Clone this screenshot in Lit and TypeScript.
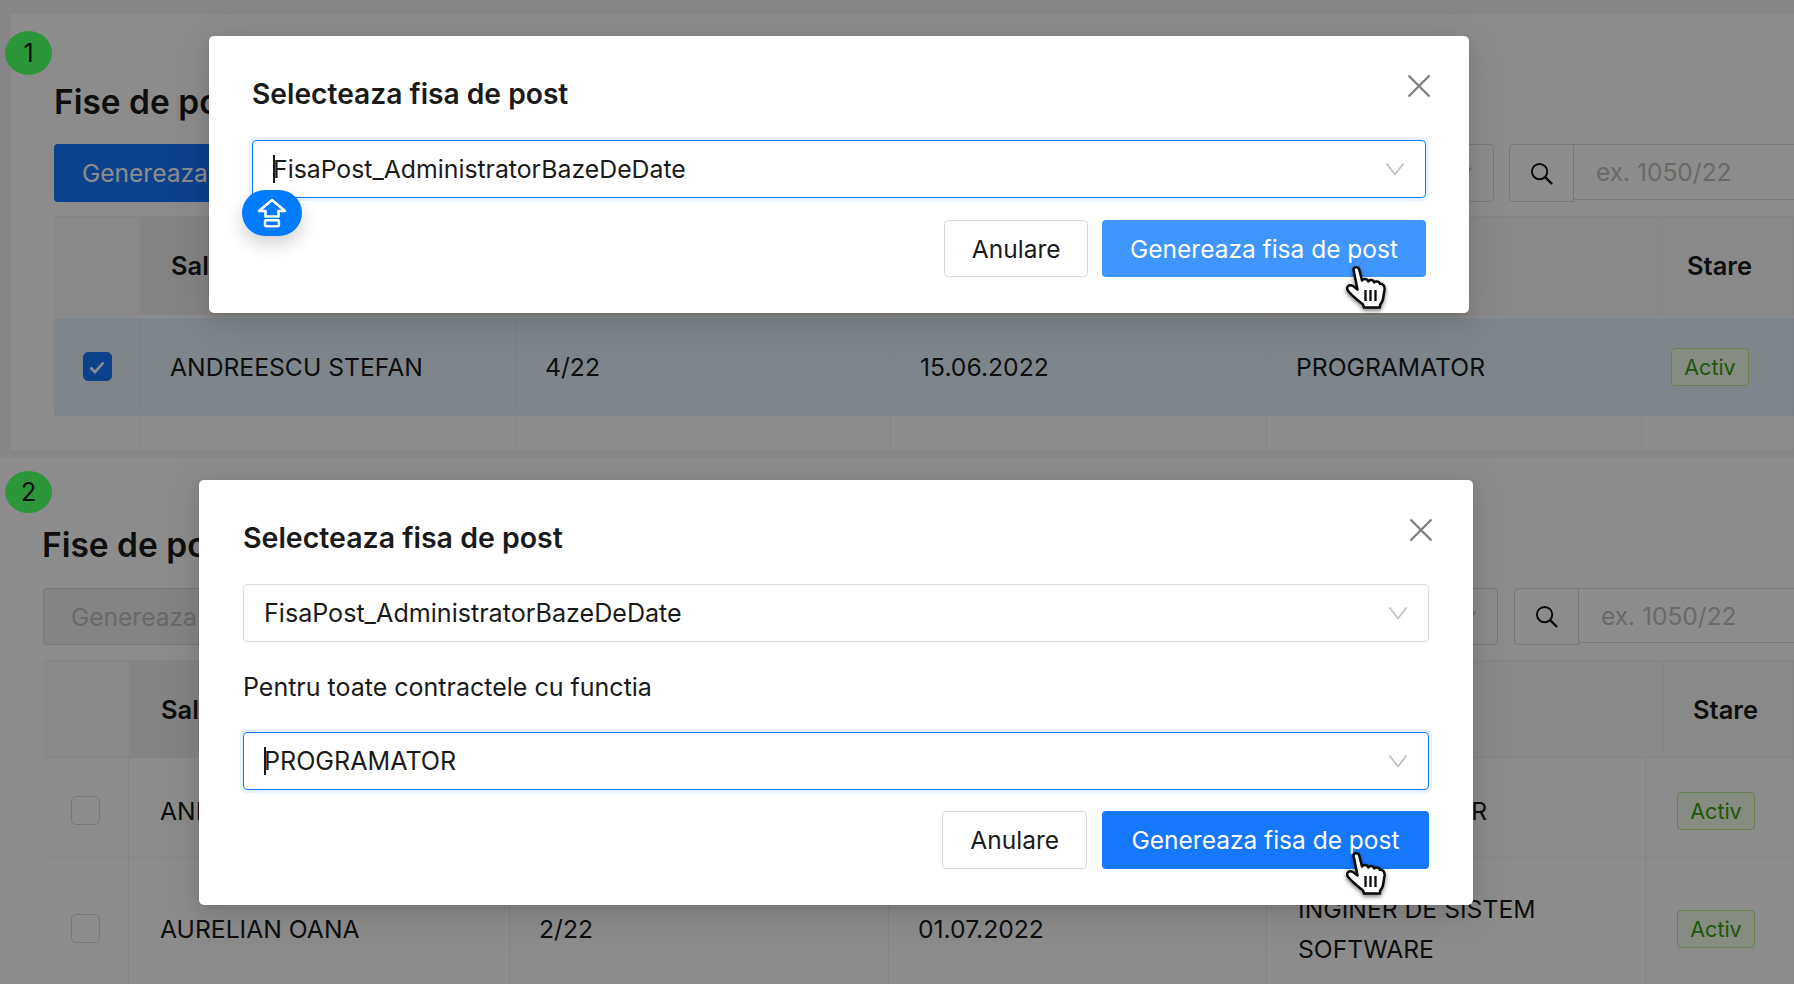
import { LitElement, html, css, nothing } from "lit";
import { customElement } from "lit/decorators.js";

const chevron = html`<svg class="chev" viewBox="0 0 20 14" fill="none"><path d="M1.5 1.5 L10 12.5 L18.5 1.5" stroke="#bdbdbd" stroke-width="1.6"/></svg>`;

const closeIcon = html`<svg class="close" viewBox="0 0 24 24" fill="none"><path d="M1.5 1.5 L22.5 22.5 M22.5 1.5 L1.5 22.5" stroke="#808080" stroke-width="2.3"/></svg>`;

const searchIcon = html`<svg class="search" viewBox="0 0 24 24" fill="none"><circle cx="10" cy="10" r="8" stroke="#111" stroke-width="2"/><path d="M15.8 15.8 L23 23" stroke="#111" stroke-width="2.4"/></svg>`;

const checkIcon = html`<svg class="tick" viewBox="0 0 20 20" fill="none"><path d="M3.5 10.5 L8 15 L16.5 5.5" stroke="#fff" stroke-width="2.6"/></svg>`;

const hand = html`<svg class="hand" viewBox="0 0 40 43" fill="none">
  <path d="M7.5 3.5 C7.5 .5 12.5 .5 13.2 3.5 L16 14.5 C17.5 12 21.5 12.5 22.3 15.5 C23.8 13.2 27.6 13.7 28.2 16.5 C29.8 14.8 33.2 15.2 34 17.8 C37 17.4 39 20 38.5 24 L37 33 C36.5 36 35 37 34 39 L34 41.5 L18 41.5 L17 38.5 C12 34.5 5.5 29.5 1.8 24.5 C-.2 21 3 18 7 20 L11.5 23.5 Z" fill="#fff" stroke="#0a0a0a" stroke-width="2.5" stroke-linejoin="round"/>
  <path d="M19.5 24 V35 M24.5 24 V35 M29.5 24 V35" stroke="#0a0a0a" stroke-width="2.3"/>
</svg>`;

const shiftBadge = html`<div class="shift"><svg viewBox="0 0 30 30" fill="none"><path d="M15 2 L28 13 H21.5 V18.5 H8.5 V13 H2 Z" stroke="#fff" stroke-width="2.6" stroke-linejoin="round"/><rect x="8" y="22.2" width="14" height="6" rx="1.5" stroke="#fff" stroke-width="2.4"/></svg></div>`;

interface Row { name: string; nr: string; date: string; fn: string[]; checked: boolean; cls: string; }

@customElement("app-root")
export class AppRoot extends LitElement {
  static styles = css`
    :host { display: block; width: 1794px; height: 984px; overflow: hidden; font-family: Inter, "Liberation Sans", sans-serif; color: #1a1a1a; background: #fff; }
    .shot { position: relative; overflow: hidden; }
    .shot.a { height: 458px; background: #f5f5f5; padding: 14px 0 8px 11px; box-sizing: border-box; }
    .shot.b { height: 526px; background: #fff; }
    .page { background: #fff; height: 100%; box-sizing: border-box; overflow: hidden; }
    .a .page { padding: 68px 0 0 43px; }
    .b .page { padding: 67px 0 0 43px; }
    h1 { margin: 0; font-size: 33.5px; line-height: 40px; font-weight: 600; white-space: nowrap; }
    .b h1 { margin-left: -1px; }
    .toolbar { display: flex; margin-top: 22px; height: 58px; }
    .b .toolbar { margin-top: 23px; height: 57px; }
    .btn { box-sizing: border-box; height: 100%; padding: 0 27px; border-radius: 4px; font-size: 24.5px; display: flex; align-items: center; white-space: nowrap; border: 1px solid transparent; }
    .btn.primary { background: #1677ff; color: #fff; }
    .btn.light { background: #4096ff; color: #fff; }
    .btn.off { background: #f0f0f0; border-color: #d9d9d9; color: #bfbfbf; }
    .btn.plain { background: #fff; border-color: #d9d9d9; color: #1a1a1a; }
    .spacer { flex: 1; }
    .tsel { position: relative; width: 200px; box-sizing: border-box; border: 1px solid #d9d9d9; border-radius: 4px; margin-right: 15px; }
    .b .tsel { margin-right: 16px; }
    .tsel .chev { right: 20px; }
    .sbtn { width: 65px; box-sizing: border-box; border: 1px solid #d9d9d9; border-radius: 4px 0 0 4px; display: flex; align-items: center; justify-content: center; }
    .search { width: 23px; height: 23px; }
    .sinput { width: 220px; box-sizing: border-box; height: 56px; border: 1px solid #d9d9d9; border-left: none; border-right: none; color: #bfbfbf; font-size: 24.5px; display: flex; align-items: center; padding-left: 22px; }
    .b .sinput { height: 55px; width: 215px; }
    .table { margin-top: 14px; }
    .b .table { margin-top: 15px; }
    .thead, .row { display: grid; }
    .a .thead { grid-template-columns: 87px 375px 1fr 135px; height: 99px; margin-bottom: 3px; }
    .b .thead { grid-template-columns: 87px 380px 1fr 130px; height: 98px; }
    .a .row { grid-template-columns: 87px 375px 375px 376px 375px 152px; }
    .b .row { grid-template-columns: 86px 381px 379px 378px 379px 148px; }
    .thead > div { background: #fafafa; border-right: 1px solid #f0f0f0; border-top: 1px solid #f0f0f0; border-bottom: 1px solid #f0f0f0; display: flex; align-items: center; padding-left: 30px; font-weight: 600; font-size: 25.5px; box-sizing: border-box; white-space: nowrap; }
    .b .thead > div.sorted { padding-left: 31px; }
    .a .thead > div:last-child { padding-left: 28px; }
    .b .thead > div:last-child { padding-left: 29px; }
    .thead > div.sorted { background: #f0f0f0; }
    .row > div { border-right: 1px solid #f0f0f0; border-bottom: 1px solid #f0f0f0; box-sizing: border-box; display: flex; align-items: center; padding-left: 29px; font-size: 24.7px; line-height: 40px; white-space: nowrap; }
    .b .row > div { padding-left: 31px; }
    .b .row > div:nth-child(3), .b .row > div:nth-child(4) { padding-left: 29px; }
    .row > div.ck, .b .row > div.ck { padding-left: 0; justify-content: center; }
    .row.picked > div { background: #e6f4ff; border-color: #e0ecf5; }
    .row.h98 { height: 98px; }
    .row.h100 { height: 100px; }
    .row.h100 > div { padding-top: 6px; }
    .row.h138 { height: 142px; }
    .row.empty { height: 40px; }
    .cb { width: 29px; height: 29px; box-sizing: border-box; border: 1px solid #d9d9d9; border-radius: 5px; background: #fff; display: flex; align-items: center; justify-content: center; }
    .cb.on { background: #1677ff; border-color: #1677ff; }
    .tick { width: 20px; height: 20px; }
    .tag { width: 78px; height: 38px; margin-top: 1px; box-sizing: border-box; border: 1px solid #b7eb8f; background: #f6ffed; border-radius: 4px; color: #389e0d; font-size: 21.5px; display: flex; align-items: center; justify-content: center; }
    .fn { display: block; white-space: normal; }

    .scrim { position: absolute; inset: 0; background: rgba(0,0,0,.45); }
    .step { position: absolute; left: 5px; width: 47px; height: 44px; border-radius: 50%; background: #2b973a; color: #0c0c0c; font-size: 25px; display: flex; align-items: center; justify-content: center; }
    .a .step { top: 31px; }
    .b .step { top: 13px; height: 42px; }
    .modal { position: absolute; background: #fff; border-radius: 5px; box-sizing: border-box; box-shadow: 0 6px 16px rgba(0,0,0,.08), 0 3px 6px -4px rgba(0,0,0,.12), 0 9px 40px 10px rgba(0,0,0,.07); }
    .a .modal { left: 209px; top: 36px; width: 1260px; padding: 38px 43px 36px; }
    .b .modal { left: 199px; top: 22px; width: 1274px; padding: 38px 44px 36px 44px; }
    .title { font-size: 28.2px; line-height: 40px; font-weight: 600; margin-bottom: 26px; }
    .b .title { font-size: 28.5px; }
    .sel { position: relative; height: 58px; box-sizing: border-box; border: 1px solid #d9d9d9; border-radius: 4px; display: flex; align-items: center; padding: 0 20px; font-size: 24.8px; }
    .b .sel { font-size: 25.1px; }
    .sel.focus { border-color: #1677ff; box-shadow: 0 0 0 3px rgba(5,145,255,.1); }
    .caret { display: inline-block; width: 2px; height: 28px; background: #1a1a1a; margin-right: -2px; flex: none; }
    .chev { position: absolute; right: 20px; top: 50%; width: 20px; height: 14px; margin-top: -7px; }
    .close { position: absolute; width: 24px; height: 24px; }
    .a .close { left: 1198px; top: 38px; }
    .b .close { left: 1210px; top: 38px; }
    .label { font-size: 25px; line-height: 34px; margin: 28px 0 28px; }
    .actions { display: flex; justify-content: flex-end; gap: 14px; height: 57px; margin-top: 22px; }
    .a .actions .plain { padding: 0 26.5px; }
    .b .actions { margin-top: 21px; height: 58px; gap: 15px; }
    .b .actions .primary { padding: 0 28.5px; }
    .shift { position: absolute; left: 33px; top: 154px; width: 60px; height: 46px; border-radius: 23px; background: #007bff; display: flex; align-items: center; justify-content: center; box-shadow: 0 8px 18px rgba(0,0,0,.18); }
    .shift svg { width: 30px; height: 30px; }
    .hand { position: absolute; width: 40px; height: 43px; filter: drop-shadow(0 2px 2px rgba(0,0,0,.5)); }
    .a .hand { left: 1137px; top: 230px; }
    .b .hand { left: 1147px; top: 372px; }
  `;

  private renderPage(rows: Row[], emptyRow: boolean, disabled: boolean) {
    return html`<div class="page">
      <h1>Fise de post</h1>
      <div class="toolbar">
        <div class="btn ${disabled ? "off" : "primary"}">Genereaza fisa de post</div>
        <div class="spacer"></div>
        <div class="tsel">${chevron}</div>
        <div class="sbtn">${searchIcon}</div>
        <div class="sinput">ex. 1050/22</div>
      </div>
      <div class="table">
        <div class="thead"><div></div><div class="sorted">Salariat</div><div></div><div>Stare</div></div>
        ${rows.map(r => html`<div class="row ${r.cls}">
          <div class="ck"><span class="cb ${r.checked ? "on" : ""}">${r.checked ? checkIcon : nothing}</span></div>
          <div>${r.name}</div><div>${r.nr}</div><div>${r.date}</div>
          <div><span class="fn">${r.fn.map(l => html`${l}<br />`)}</span></div>
          <div><span class="tag">Activ</span></div>
        </div>`)}
        ${emptyRow ? html`<div class="row empty"><div></div><div></div><div></div><div></div><div></div><div></div></div>` : nothing}
      </div>
    </div>`;
  }

  render() {
    return html`
      <section class="shot a">
        ${this.renderPage([{ name: "ANDREESCU STEFAN", nr: "4/22", date: "15.06.2022", fn: ["PROGRAMATOR"], checked: true, cls: "picked h98" }], true, false)}
        <div class="scrim"></div>
        <div class="step">1</div>
        <div class="modal">
          <div class="title">Selecteaza fisa de post</div>
          ${closeIcon}
          <div class="sel focus"><span class="caret"></span>FisaPost_AdministratorBazeDeDate${chevron}</div>
          <div class="actions"><div class="btn plain">Anulare</div><div class="btn light">Genereaza fisa de post</div></div>
          ${shiftBadge}
          ${hand}
        </div>
      </section>
      <section class="shot b">
        ${this.renderPage([
          { name: "ANDREESCU STEFAN", nr: "4/22", date: "15.06.2022", fn: ["PROGRAMATOR"], checked: false, cls: "h100" },
          { name: "AURELIAN OANA", nr: "2/22", date: "01.07.2022", fn: ["INGINER DE SISTEM", "SOFTWARE"], checked: false, cls: "h138" },
        ], false, true)}
        <div class="scrim"></div>
        <div class="step">2</div>
        <div class="modal">
          <div class="title">Selecteaza fisa de post</div>
          ${closeIcon}
          <div class="sel">FisaPost_AdministratorBazeDeDate${chevron}</div>
          <div class="label">Pentru toate contractele cu functia</div>
          <div class="sel focus"><span class="caret"></span>PROGRAMATOR${chevron}</div>
          <div class="actions"><div class="btn plain">Anulare</div><div class="btn primary">Genereaza fisa de post</div></div>
          ${hand}
        </div>
      </section>
    `;
  }
}
